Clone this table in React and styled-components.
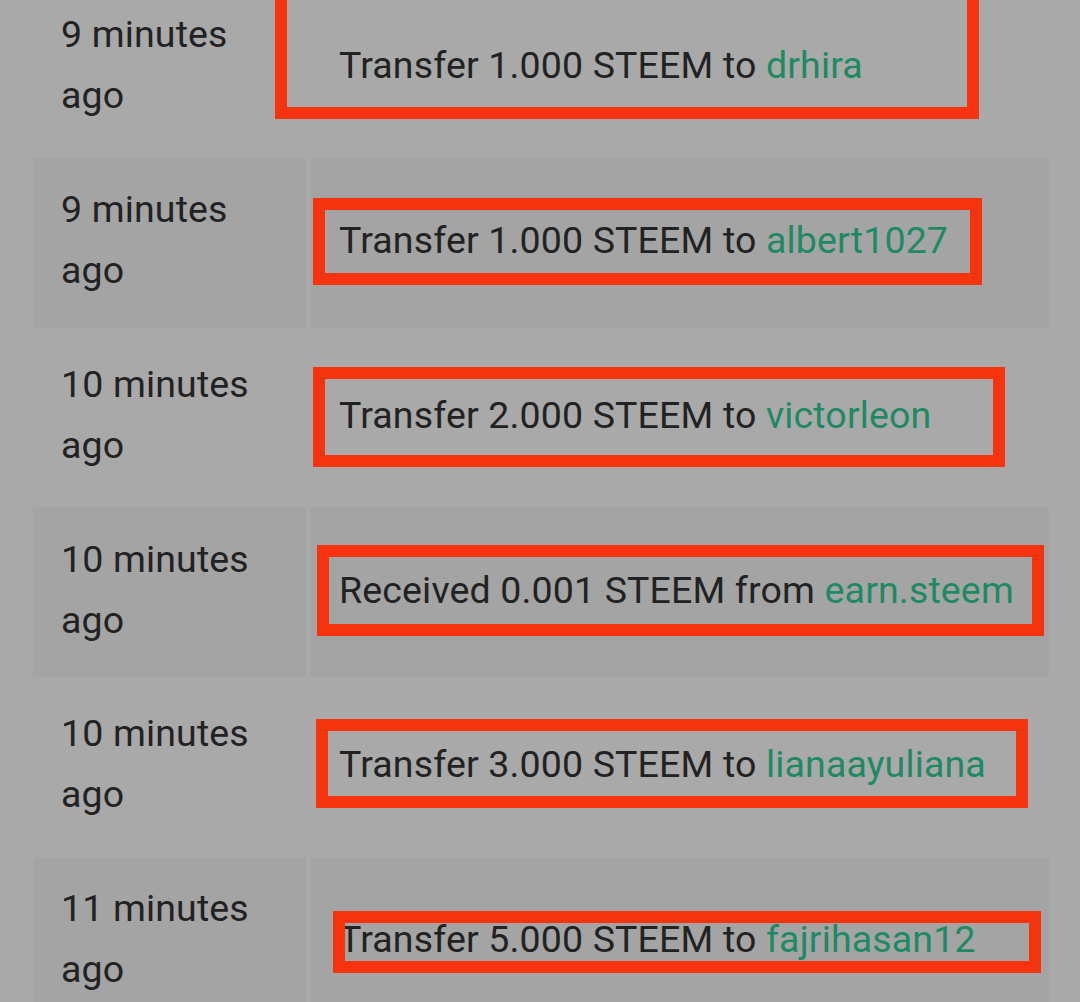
import React from 'react';
import styled, { createGlobalStyle } from 'styled-components';

const GlobalStyle = createGlobalStyle`
  html, body {
    margin: 0;
    padding: 0;
    background: #a9a9a9;
    overflow: hidden;
  }
  body {
    font-family: Roboto, "Noto Sans", "Liberation Sans", sans-serif;
  }
`;

const Page = styled.div`
  width: 1080px;
  height: 1002px;
  overflow: hidden;
  background: #a9a9a9;
`;

// the list is scrolled a little, the first row is cut at the top
const HistoryList = styled.div`
  display: flex;
  flex-direction: column;
  gap: 5px;
  margin-top: -17px;
  padding-left: 33px;
`;

const Row = styled.div`
  display: grid;
  grid-template-columns: 273px 738px;
  column-gap: 5px;
  height: 169.75px;
`;

const Cell = styled.div`
  display: flex;
  align-items: center;
  background: ${p => (p.$shaded ? '#a4a4a4' : 'transparent')};
  color: #222222;
  font-size: 37.5px;
  letter-spacing: 0.15px;
  line-height: 61px;
`;

const TimeCell = styled(Cell)`
  padding: 0 26px 5px 28px;
`;

const OpCell = styled(Cell)`
  position: relative;
  padding-left: 28px;
  padding-bottom: 4px;
  white-space: nowrap;
`;

const Account = styled.span`
  color: #1e8a63;
`;

// red annotation boxes drawn over the screenshot
const Mark = styled.div`
  position: absolute;
  left: ${p => p.$x}px;
  top: ${p => p.$y}px;
  width: ${p => p.$w}px;
  height: ${p => p.$h}px;
  border: 12px solid #f5340f;
  box-sizing: border-box;
  pointer-events: none;
`;

const rows = [
  { time: '9 minutes ago', text: 'Transfer 1.000 STEEM to', who: 'drhira', mark: [-36, -14, 704, 150] },
  { time: '9 minutes ago', text: 'Transfer 1.000 STEEM to', who: 'albert1027', mark: [2, 40, 669, 87] },
  { time: '10 minutes ago', text: 'Transfer 2.000 STEEM to', who: 'victorleon', mark: [2, 34, 692, 100] },
  { time: '10 minutes ago', text: 'Received 0.001 STEEM from', who: 'earn.steem', mark: [6, 38, 727, 91] },
  { time: '10 minutes ago', text: 'Transfer 3.000 STEEM to', who: 'lianaayuliana', mark: [5, 37, 712, 89] },
  { time: '11 minutes ago', text: 'Transfer 5.000 STEEM to', who: 'fajrihasan12', mark: [22, 54, 708, 62] },
];

export default function App() {
  return (
    <Page>
      <GlobalStyle />
      <HistoryList>
        {rows.map((r, i) => {
          const shaded = i % 2 === 1;
          const [x, y, w, h] = r.mark;
          return (
            <Row key={i}>
              <TimeCell $shaded={shaded}>
                <div>{r.time}</div>
              </TimeCell>
              <OpCell $shaded={shaded}>
                <span>
                  {r.text} <Account>{r.who}</Account>
                </span>
                <Mark $x={x} $y={y} $w={w} $h={h} />
              </OpCell>
            </Row>
          );
        })}
      </HistoryList>
    </Page>
  );
}
